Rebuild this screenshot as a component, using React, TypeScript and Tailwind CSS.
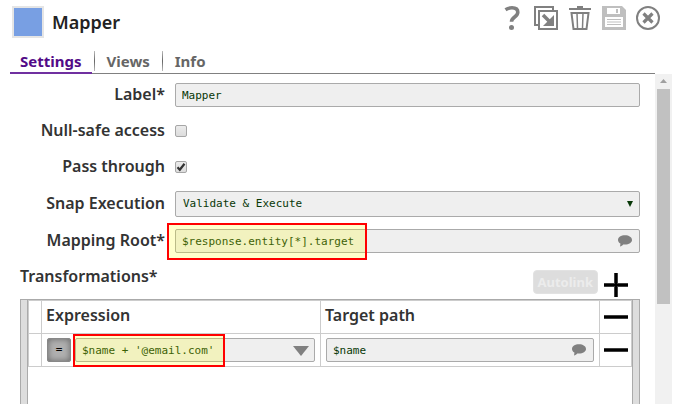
import { Fragment, useState } from "react";
import type { ReactNode } from "react";

const TABS = ["Settings", "Views", "Info"];

const fieldClass =
  "block w-full rounded-xs border border-[#aaaaaa] bg-[#efefef] font-['DejaVu_Sans_Mono','Liberation_Mono',monospace] text-[11px] text-[#083808] outline-none";

function IconButton({ label, children }: { label: string; children: ReactNode }) {
  return (
    <button type="button" aria-label={label} className="size-6 shrink-0">
      {children}
    </button>
  );
}

function CommentIcon() {
  return (
    <svg viewBox="0 0 14 12" className="pointer-events-none absolute top-1.5 right-2 h-3 w-3.5" fill="#808080">
      <path d="M7 0.3C3 .3 0 2.300 0 5c0 1.600.9 2.800 2.400 3.600-.1 1-.1 1.900-.4 2.900 1.300-.4 2.500-1.100 3.200-2.100.6.1 1.200.1 1.800.1 4 0 7-1.900 7-4.500S11 .3 7 .3z" />
    </svg>
  );
}

function Highlight({ className }: { className: string }) {
  return <div className={`pointer-events-none absolute border-2 border-[#ff0000] bg-[#ffff00]/20 ${className}`} />;
}

function Row({ id, label, children }: { id: string; label: string; children: ReactNode }) {
  return (
    <div className="grid grid-cols-[145px_1fr] items-center gap-2.5">
      <label htmlFor={id} className="pb-0.5 text-right text-base leading-[22px] font-semibold whitespace-nowrap">
        {label}
      </label>
      {children}
    </div>
  );
}

function Checkbox({ id, defaultChecked }: { id: string; defaultChecked?: boolean }) {
  return (
    <div className="relative size-3">
      <input
        id={id}
        type="checkbox"
        defaultChecked={defaultChecked}
        className="peer block size-3 appearance-none rounded-xs border border-[#a6a6a6] bg-linear-to-b from-[#ebebeb] to-[#dcdcdc]"
      />
      <svg viewBox="0 0 12 12" className="pointer-events-none absolute inset-0 hidden size-3 peer-checked:block">
        <path d="M2.500 6.300l2.300 2.500 4.700-6" fill="none" stroke="#333333" strokeWidth="2.200" />
      </svg>
    </div>
  );
}

function RemoveButton() {
  return (
    <button type="button" aria-label="Remove row" className="block h-6 w-full">
      <svg viewBox="0 0 24 24" className="mx-auto size-6">
        <path d="M0 12h24" stroke="#000000" strokeWidth="4" opacity=".75" />
        <path d="M0 12h24" stroke="#000000" strokeWidth="2" />
      </svg>
    </button>
  );
}

export default function App() {
  const [tab, setTab] = useState("Settings");

  return (
    <div className="flex h-screen flex-col overflow-hidden bg-white font-['Noto_Sans','Open_Sans',sans-serif] text-[#333333]">
      <header className="flex items-start justify-between pt-1.5 pr-[22px] pl-3">
        <div className="flex items-center gap-2">
          <div className="size-8 border-2 border-[#e5e5e5] bg-[#789fe3]" />
          <h1 className="text-lg leading-8 font-semibold text-[#222222]">Mapper</h1>
        </div>
        <div className="flex gap-2.5">
          <IconButton label="Help">
            <svg viewBox="0 0 24 24" fill="none" stroke="#808080">
              <path d="M5.500 3.800C7.500 2.500 9.500 1.800 12 1.800c3.300 0 5.800 1.500 5.800 4.500 0 4.700-6.300 4.800-6.300 9.500" strokeWidth="3.600" />
              <circle cx="11.500" cy="21.500" r="2.500" fill="#808080" stroke="none" />
            </svg>
          </IconButton>
          <IconButton label="Copy">
            <svg viewBox="0 0 24 24" fill="none" stroke="#808080" strokeWidth="2">
              <path d="M4 19H1V1h18v3" />
              <path d="M5 5h18v18H5z" />
              <path d="M9 9l7 7" strokeWidth="3.500" />
              <path d="M20 9v11H9z" fill="#808080" stroke="none" />
            </svg>
          </IconButton>
          <IconButton label="Delete">
            <svg viewBox="0 0 24 24" fill="none" stroke="#808080" strokeWidth="2">
              <path d="M1 3h22M9 1h6" />
              <path d="M3.500 7h17l-2 16h-13z" />
              <path d="M9 7l.5 15M15 7l-.5 15" strokeWidth="1.500" />
            </svg>
          </IconButton>
          <IconButton label="Save">
            <svg viewBox="0 0 24 24">
              <path d="M0 0h20l4 4v20H0z" fill="#bfbfbf" />
              <path d="M5 2h13v6H5zM3 11h18v10H3z" fill="#ffffff" />
              <path d="M14 3h2v4h-2zM5 13h14v1H5zM5 15.500h14v1H5zM5 18h14v1H5z" fill="#bfbfbf" />
            </svg>
          </IconButton>
          <IconButton label="Close">
            <svg viewBox="0 0 24 24" fill="none" stroke="#808080">
              <circle cx="12" cy="12" r="11" strokeWidth="2" />
              <path d="M7.500 7.500l9 9M16.500 7.500l-9 9" strokeWidth="3.200" />
            </svg>
          </IconButton>
        </div>
      </header>

      <nav className="mt-3 mr-[27px] ml-2.5 flex h-6 shrink-0 border-b border-[#808080] text-[15px] font-bold">
        {TABS.map((name, i) => (
          <Fragment key={name}>
            {i > 0 && <span className="mx-0.5 mt-px h-5 w-px bg-linear-to-b from-[#bbbbbb] via-[#666666] to-[#bbbbbb]" />}
            <button
              type="button"
              onClick={() => setTab(name)}
              className={
                "-mb-px border-b-2 px-2.5 leading-[22px] " +
                (name === tab ? "border-[#7030a0] text-[#520a87]" : "border-transparent text-[#666666]")
              }
            >
              {name}
            </button>
          </Fragment>
        ))}
      </nav>

      <div className="flex min-h-0 flex-1 pr-2.5">
        <main className="min-w-0 flex-1 overflow-hidden pt-[9px] pr-[15px] pl-5">
          <form className="flex flex-col gap-3">
            <Row id="label" label="Label*">
              <input id="label" defaultValue="Mapper" className={`${fieldClass} h-6 px-1.5`} />
            </Row>
            <Row id="nullsafe" label="Null-safe access">
              <Checkbox id="nullsafe" />
            </Row>
            <Row id="passthrough" label="Pass through">
              <Checkbox id="passthrough" defaultChecked />
            </Row>
            <Row id="execution" label="Snap Execution">
              <div className="relative">
                <select id="execution" className={`${fieldClass} h-[26px] appearance-none px-[7px]`}>
                  <option>Validate &amp; Execute</option>
                  <option>Execute only</option>
                  <option>Disabled</option>
                </select>
                <svg viewBox="0 0 6 6" className="pointer-events-none absolute top-2.5 right-[7px] size-1.5">
                  <path d="M0 0h6L3 6z" fill="#083808" />
                </svg>
              </div>
            </Row>
            <Row id="root" label="Mapping Root*">
              <div className="relative">
                <input id="root" defaultValue="$response.entity[*].target" className={`${fieldClass} h-6 px-1.5`} />
                <CommentIcon />
                <Highlight className="-top-1.5 -left-2 h-[37px] w-[200px]" />
              </div>
            </Row>
          </form>

          <div className="mt-3 flex h-[34px] items-start">
            <h2 className="flex-1 text-base leading-[22px] font-semibold">Transformations*</h2>
            <button
              type="button"
              disabled
              className="mr-1.5 mb-[5px] h-6 self-end rounded-sm border border-[#e2e2e2] bg-[#dddddd] px-1 text-[13px] leading-5 font-bold text-[#ececec]"
            >
              Autolink
            </button>
            <button type="button" aria-label="Add row" className="mr-3 mb-0.5 size-6 self-end">
              <svg viewBox="0 0 24 24">
                <path d="M0 12h24M12 0v24" stroke="#000000" strokeWidth="4" opacity=".75" />
                <path d="M0 12h24M12 0v24" stroke="#000000" strokeWidth="2" />
              </svg>
            </button>
          </div>

          <div className="flex h-60 border-t border-[#aaaaaa]">
            <div className="w-2 shrink-0 border-x border-[#aaaaaa] bg-[#dddddd]" />
            <div className="min-w-0 flex-1">
              <table className="w-full table-fixed border-collapse text-left [&_td]:border [&_td]:border-[#cccccc] [&_th]:border [&_th]:border-[#cccccc]">
                <colgroup>
                  <col className="w-[13px]" />
                  <col />
                  <col />
                  <col className="w-8" />
                </colgroup>
                <thead>
                  <tr className="h-[33px]">
                    <th />
                    <th className="px-1 pb-1 text-base leading-6 font-semibold">Expression</th>
                    <th className="px-1 pb-1 text-base leading-6 font-semibold">Target path</th>
                    <th>
                      <RemoveButton />
                    </th>
                  </tr>
                </thead>
                <tbody>
                  <tr className="h-[33px]">
                    <td />
                    <td className="px-[5px]">
                      <div className="flex gap-1">
                        <button
                          type="button"
                          aria-label="Toggle expression"
                          className="size-6 shrink-0 rounded-xs border border-[#888888] bg-[#b0b0b0] font-['DejaVu_Sans_Mono',monospace] text-[11px] leading-[22px] text-black shadow-[inset_0_0_6px_#666666]"
                        >
                          =
                        </button>
                        <div className="relative flex-1">
                          <input
                            aria-label="Expression"
                            defaultValue="$name + '@email.com'"
                            className={`${fieldClass} h-6 px-1.5`}
                          />
                          <svg viewBox="0 0 16 10" className="pointer-events-none absolute top-2 right-1.5 h-2.5 w-4">
                            <path d="M0 0h16L8 10z" fill="#808080" />
                          </svg>
                          <Highlight className="-top-1 -left-0.5 h-[33px] w-[152px]" />
                        </div>
                      </div>
                    </td>
                    <td className="px-[5px]">
                      <div className="relative">
                        <input aria-label="Target path" defaultValue="$name" className={`${fieldClass} h-6 px-1.5`} />
                        <CommentIcon />
                      </div>
                    </td>
                    <td>
                      <RemoveButton />
                    </td>
                  </tr>
                </tbody>
              </table>
            </div>
            <div className="w-2 shrink-0 border-x border-[#aaaaaa] bg-[#dddddd]" />
          </div>
        </main>

        <div className="w-[17px] shrink-0 bg-[#f1f1f1]" aria-hidden="true">
          <svg viewBox="0 0 17 15" className="h-[15px] w-full">
            <path d="M5 9h7L8.500 5z" fill="#a0a0a0" />
          </svg>
          <div className="mx-0.5 h-[215px] bg-[#c1c1c1]" />
        </div>
      </div>
    </div>
  );
}
